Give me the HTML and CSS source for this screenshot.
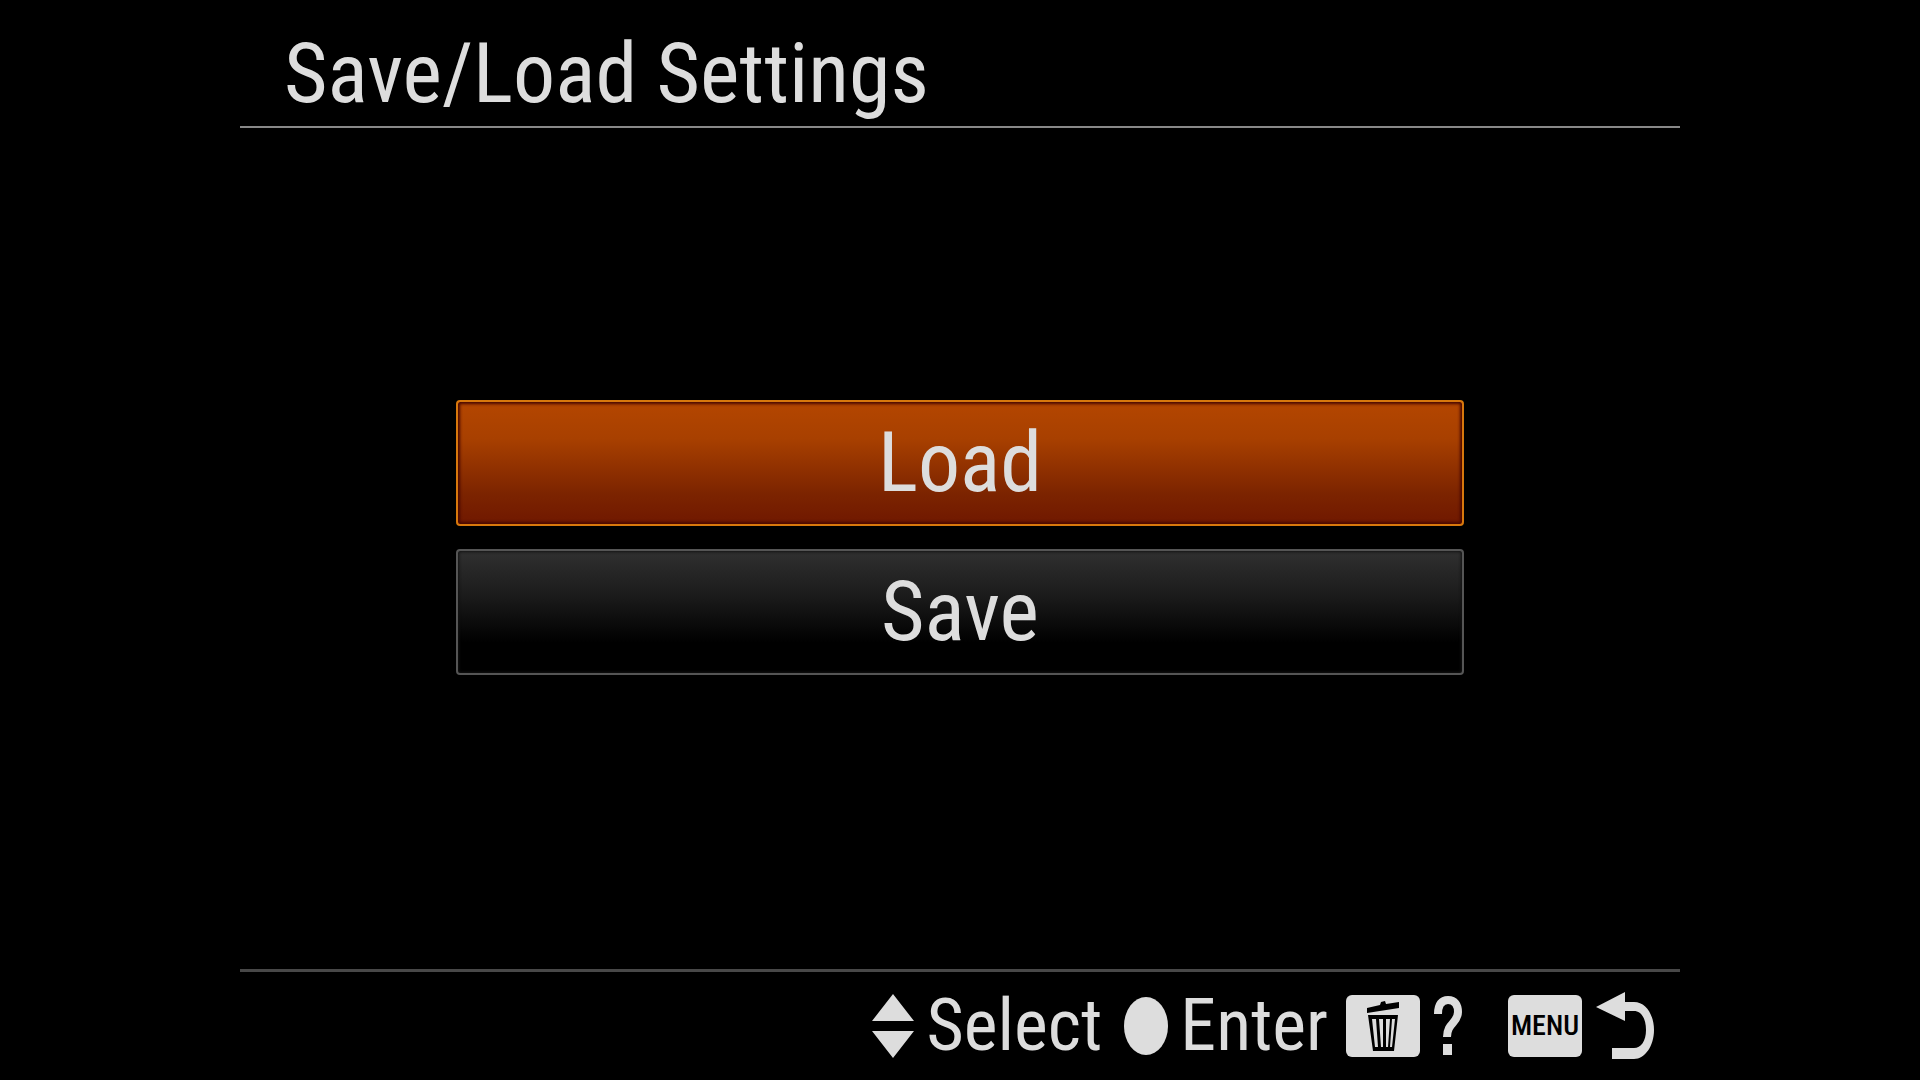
FILE: index.html
```html
<!DOCTYPE html>
<html lang="en">
<head>
<meta charset="utf-8">
<meta name="viewport" content="width=device-width, initial-scale=1">
<title>Save/Load Settings</title>
<link rel="stylesheet" href="styles.css">
</head>
<body>
<div class="screen">
  <header class="header">
    <h1 class="title">Save/Load Settings</h1>
  </header>
  <main class="menu">
    <button type="button" class="option option-selected">Load</button>
    <button type="button" class="option">Save</button>
  </main>
  <footer class="footer">
    <div class="hint hint-select">
      <svg class="icon-arrows" viewBox="0 0 42 64" aria-hidden="true"><path d="M21 0 42 27H0ZM0 37H42L21 64Z"/></svg>
      <span>Select</span>
    </div>
    <div class="hint hint-enter">
      <svg class="icon-dot" viewBox="0 0 44 58" aria-hidden="true"><ellipse cx="22" cy="29" rx="22" ry="29"/></svg>
      <span>Enter</span>
    </div>
    <button type="button" class="hint hint-help" aria-label="Help">
      <span class="key">
        <svg class="icon-trash" viewBox="0 0 32 50" aria-hidden="true">
          <path d="M0 7 13 4 14 1 18 0 19 3 32 1V7L0 12Z"/>
          <path fill-rule="evenodd" d="M1 14H31L27 50H6ZM5 18 8 46H11L9 18ZM12 18 14 46H16V18ZM19 18V46H21L23 18ZM25 18 23 46H25L28 18Z"/>
        </svg>
      </span>
      <svg class="icon-question" viewBox="0 0 28 60" aria-hidden="true">
        <path class="stroke" d="M4 18C4 8 8 4 14 4C21 4 24 9 24 16C24 27 13 27 13 41"/>
        <path d="M9 48H18V59H9Z"/>
      </svg>
    </button>
    <button type="button" class="hint hint-back" aria-label="Menu, back">
      <span class="key key-menu">MENU</span>
      <svg class="icon-return" viewBox="0 0 58 67" aria-hidden="true">
        <path d="M0 15 29 0V10H38C50 10 58 23 58 38C58 54 49 67 38 67H16V56H38C45 56 50 49 50 38C50 26 45 19 38 19H29V29Z"/>
      </svg>
    </button>
  </footer>
</div>
</body>
</html>
```
FILE: styles.css
```css
* {
  box-sizing: border-box;
}

body {
  margin: 0;
  background: #000;
  color: #ddd;
  font-family: "Roboto Condensed", "Liberation Sans Narrow", "Liberation Sans", sans-serif;
}

button {
  margin: 0;
  padding: 0;
  border: 0;
  background: none;
  color: inherit;
  font: inherit;
}

svg {
  display: block;
  flex: none;
  fill: #ddd;
}

.screen {
  display: flex;
  flex-direction: column;
  width: 75%;
  min-height: 100vh;
  margin: 0 auto;
}

.header {
  padding: 24px 44px 2px;
  border-bottom: 2px solid #888;
}

.title {
  margin: 0;
  font-size: 84px;
  font-weight: 400;
  line-height: 100px;
}

.menu {
  display: flex;
  flex: 1;
  flex-direction: column;
  align-items: center;
  justify-content: center;
  gap: 23px;
  padding-bottom: 22px;
}

.option {
  width: 70%;
  height: 126px;
  border: 2px solid #555;
  border-radius: 4px;
  background: linear-gradient(#303030, #1c1c1c 35%, #000 75%);
  box-shadow: inset 0 0 3px 1px #111;
  font-size: 84px;
  line-height: 100px;
}

.option-selected {
  border-color: #d8780c;
  background: linear-gradient(#b44600, #a84000 30%, #7c2400 75%, #701800);
  box-shadow: inset 0 0 3px 2px #480800;
}

.footer {
  display: flex;
  align-items: center;
  justify-content: flex-end;
  height: 111px;
  padding: 0 26px 1px 0;
  border-top: 3px solid #484848;
  font-size: 72px;
  line-height: 88px;
}

.hint {
  display: flex;
  align-items: center;
  gap: 14px;
}

.hint-select,
.hint-enter {
  gap: 12px;
}

.hint-enter {
  margin-left: 22px;
}

.hint-help {
  margin-left: 18px;
}

.hint-back {
  margin-left: 46px;
}

.key {
  display: flex;
  align-items: center;
  justify-content: center;
  width: 74px;
  height: 62px;
  border-radius: 6px;
  background: #ddd;
  color: #000;
}

.key-menu {
  font-size: 28px;
  font-weight: 500;
  line-height: 32px;
}

.icon-arrows {
  width: 42px;
  height: 64px;
}

.icon-dot {
  width: 44px;
  height: 58px;
}

.icon-trash {
  width: 32px;
  height: 50px;
  fill: #000;
}

.icon-question {
  width: 28px;
  height: 60px;
}

.icon-return {
  width: 58px;
  height: 67px;
}

.stroke {
  fill: none;
  stroke: #ddd;
  stroke-width: 8;
}
```
